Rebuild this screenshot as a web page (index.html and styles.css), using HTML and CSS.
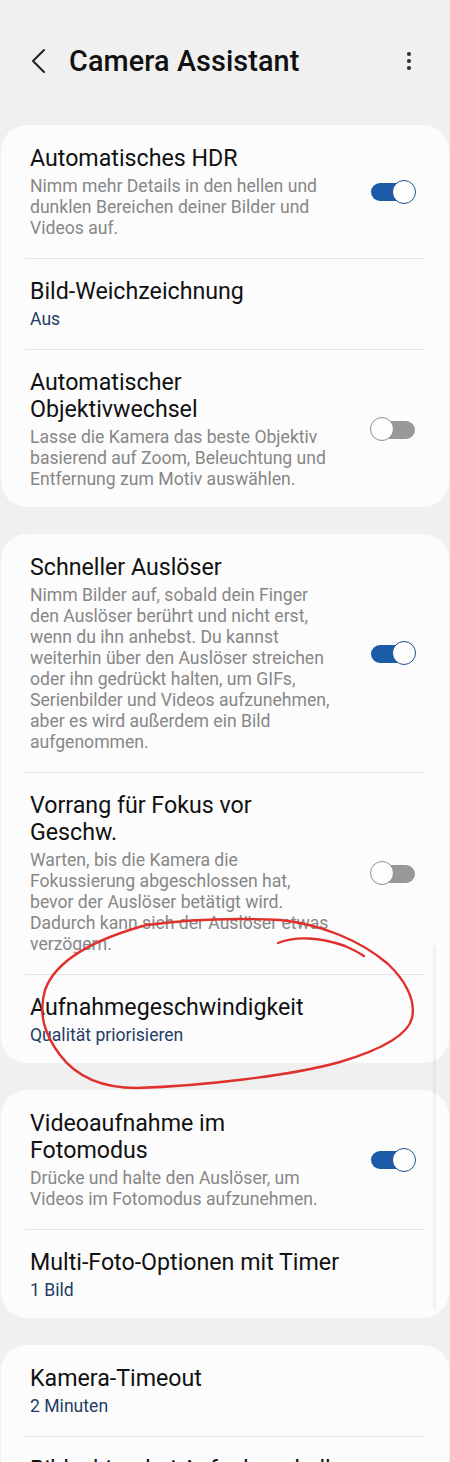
FILE: index.html
```html
<!DOCTYPE html>
<html lang="de">
<head>
<meta charset="utf-8">
<title>Camera Assistant</title>
<link rel="stylesheet" href="styles.css">
</head>
<body>
<div class="page">
  <header class="appbar">
    <svg class="back" width="16" height="26" viewBox="0 0 16 26"><polyline points="13,2 2,13 13,24" fill="none" stroke="#222" stroke-width="2" stroke-linecap="round" stroke-linejoin="round"/></svg>
    <h1 class="appbar-title">Camera Assistant</h1>
    <svg class="more" width="6" height="20" viewBox="0 0 6 20"><circle cx="3" cy="3" r="2.1" fill="#333"/><circle cx="3" cy="10" r="2.1" fill="#333"/><circle cx="3" cy="17" r="2.1" fill="#333"/></svg>
  </header>

  <section class="card">
    <div class="row">
      <div class="text">
        <div class="title">Automatisches HDR</div>
        <div class="sub">Nimm mehr Details in den hellen und<br>dunklen Bereichen deiner Bilder und<br>Videos auf.</div>
      </div>
      <span class="toggle on"></span>
    </div>
    <div class="row">
      <div class="text">
        <div class="title">Bild-Weichzeichnung</div>
        <div class="value">Aus</div>
      </div>
    </div>
    <div class="row">
      <div class="text">
        <div class="title">Automatischer<br>Objektivwechsel</div>
        <div class="sub">Lasse die Kamera das beste Objektiv<br>basierend auf Zoom, Beleuchtung und<br>Entfernung zum Motiv auswählen.</div>
      </div>
      <span class="toggle off"></span>
    </div>
  </section>

  <section class="card">
    <div class="row">
      <div class="text">
        <div class="title">Schneller Auslöser</div>
        <div class="sub">Nimm Bilder auf, sobald dein Finger<br>den Auslöser berührt und nicht erst,<br>wenn du ihn anhebst. Du kannst<br>weiterhin über den Auslöser streichen<br>oder ihn gedrückt halten, um GIFs,<br>Serienbilder und Videos aufzunehmen,<br>aber es wird außerdem ein Bild<br>aufgenommen.</div>
      </div>
      <span class="toggle on"></span>
    </div>
    <div class="row">
      <div class="text">
        <div class="title">Vorrang für Fokus vor<br>Geschw.</div>
        <div class="sub">Warten, bis die Kamera die<br>Fokussierung abgeschlossen hat,<br>bevor der Auslöser betätigt wird.<br>Dadurch kann sich der Auslöser etwas<br>verzögern.</div>
      </div>
      <span class="toggle off"></span>
    </div>
    <div class="row">
      <div class="text">
        <div class="title">Aufnahmegeschwindigkeit</div>
        <div class="value">Qualität priorisieren</div>
      </div>
    </div>
  </section>

  <section class="card">
    <div class="row">
      <div class="text">
        <div class="title">Videoaufnahme im<br>Fotomodus</div>
        <div class="sub">Drücke und halte den Auslöser, um<br>Videos im Fotomodus aufzunehmen.</div>
      </div>
      <span class="toggle on"></span>
    </div>
    <div class="row">
      <div class="text">
        <div class="title">Multi-Foto-Optionen mit Timer</div>
        <div class="value">1 Bild</div>
      </div>
    </div>
  </section>

  <section class="card">
    <div class="row">
      <div class="text">
        <div class="title">Kamera-Timeout</div>
        <div class="value">2 Minuten</div>
      </div>
    </div>
    <div class="row">
      <div class="text">
        <div class="title">Bildschirm bei Aufnahme heller</div>
        <div class="value">Aus</div>
      </div>
    </div>
  </section>

  <div class="scrollbar"></div>

  <svg class="scribble" width="450" height="1462" viewBox="0 0 450 1462">
    <path d="M147 925 C 190 919, 240 918, 280 920 C 320 924, 360 940, 388 964 C 405 980, 416 1000, 412 1018 C 408 1035, 380 1050, 340 1062 C 290 1076, 200 1086, 137 1088 C 100 1088, 75 1075, 60 1055 C 45 1035, 38 1015, 45 990 C 55 962, 90 940, 150 924" fill="none" stroke="#e0302c" stroke-width="2.4" stroke-linecap="round"/>
    <path d="M278 943 C 295 936, 320 937, 345 946 C 352 949, 358 952, 364 956" fill="none" stroke="#e0302c" stroke-width="2.4" stroke-linecap="round"/>
  </svg>
</div>
</body>
</html>
```

FILE: styles.css
```css
html, body {
  margin: 0;
  padding: 0;
  background: #f0f0f0;
}
body {
  font-family: Roboto, "Noto Sans", "Liberation Sans", sans-serif;
  color: #111;
  overflow: hidden;
}
.page {
  position: relative;
  width: 450px;
  height: 1462px;
  overflow: hidden;
}
.appbar {
  height: 125px;
  display: flex;
  align-items: center;
  padding: 0 0 4px 31px;
  box-sizing: border-box;
}
.back {
  flex: none;
}
.appbar-title {
  margin: 0 0 0 22px;
  font-size: 28.8px;
  font-weight: 500;
  letter-spacing: 0.1px;
  color: #111;
  flex: 1;
}
.more {
  flex: none;
  margin-right: 38px;
}
.card {
  background: #fcfcfc;
  border-radius: 26px;
  margin: 0 1px 27px;
  padding: 0 24px;
}
.row {
  display: flex;
  align-items: center;
  padding: 19.5px 9px 18.5px 5px;
  border-top: 1px solid #e4e4e4;
}
.row:first-child {
  border-top: none;
  padding-top: 20px;
}
.row:last-child {
  padding-bottom: 17px;
}
.text {
  flex: 1;
  min-width: 0;
}
.title {
  font-size: 23.2px;
  line-height: 27px;
  color: #111;
  white-space: nowrap;
}
.sub {
  margin-top: 4px;
  font-size: 17.6px;
  line-height: 21px;
  color: #878787;
  white-space: nowrap;
}
.value {
  margin-top: 4px;
  font-size: 17.6px;
  line-height: 21px;
  color: #1f3d63;
}
.toggle {
  position: relative;
  flex: none;
  width: 46px;
  height: 25px;
}
.toggle::before {
  content: "";
  position: absolute;
  left: 1px;
  right: 1px;
  top: 3.5px;
  height: 18px;
  border-radius: 9px;
}
.toggle::after {
  content: "";
  position: absolute;
  top: 0;
  width: 22px;
  height: 22px;
  border-radius: 50%;
  background: #fdfdfd;
}
.toggle.on::before {
  background: #1b5aa6;
}
.toggle.on::after {
  right: 0;
  border: 1.5px solid #1d4f8c;
}
.toggle.off::before {
  background: #989898;
}
.toggle.off::after {
  left: 0;
  border: 1.5px solid #8e8e8e;
}
.scrollbar {
  position: absolute;
  left: 433px;
  top: 945px;
  width: 3px;
  height: 365px;
  background: rgba(0, 0, 0, 0.045);
  border-radius: 2px;
}
.scribble {
  position: absolute;
  left: 0;
  top: 0;
  pointer-events: none;
}
```
